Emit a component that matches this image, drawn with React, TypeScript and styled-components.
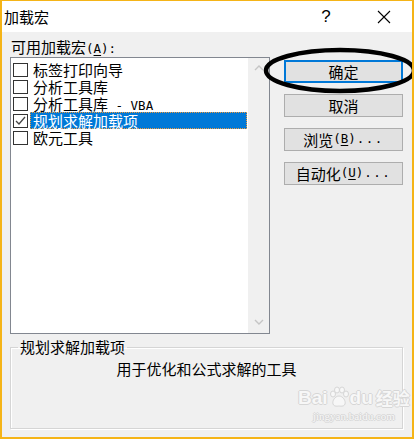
import React from "react";
import styled, { createGlobalStyle } from "styled-components";

const GlobalStyle = createGlobalStyle`
  html, body { margin: 0; padding: 0; background: #ffffff; }
  * { box-sizing: border-box; }
`;

const FONT = `"Noto Sans CJK SC", "Liberation Sans", sans-serif`;

const Window = styled.div`
  position: relative;
  width: 414px;
  height: 439px;
  border: 2px solid #f5b417;
  border-top-width: 1px;
  background: #f0f0f0;
  font-family: ${FONT};
  font-size: 15px;
  color: #000;
  display: flex;
  flex-direction: column;
  overflow: hidden;
`;

const TitleBar = styled.div`
  height: 31px;
  background: #ffffff;
  display: flex;
  align-items: center;
  padding-left: 2px;
`;

const Title = styled.div`
  flex: 1;
  font-size: 15px;
  line-height: 31px;
`;

const TitleButton = styled.div<{ $w: number }>`
  width: ${(p) => p.$w}px;
  height: 31px;
  display: flex;
  align-items: center;
  justify-content: center;
  font-family: "Liberation Sans", sans-serif;
  font-size: 17px;
`;

const Body = styled.div`
  flex: 1;
  display: flex;
  flex-direction: column;
  padding: 0 9px 0 8px;
`;

const TopArea = styled.div`
  display: grid;
  grid-template-columns: 260px 119px;
  column-gap: 14px;
`;

const LeftCol = styled.div`
  display: flex;
  flex-direction: column;
`;

const FieldLabel = styled.div`
  height: 25px;
  padding-top: 6px;
  padding-left: 1px;
  line-height: 18px;
  font-size: 15px;
`;

const Mono = styled.span`
  font-family: "DejaVu Sans Mono", "Liberation Mono", monospace;
  font-size: 12.5px;
`;

const Ul = styled.span`
  text-decoration: underline;
  text-underline-offset: 2px;
`;

const ListBox = styled.div`
  height: 277px;
  border: 1px solid #828790;
  background: #ffffff;
  display: flex;
`;

const ListItems = styled.div`
  flex: 1;
  padding-top: 3px;
  display: flex;
  flex-direction: column;
`;

const Row = styled.div`
  height: 17px;
  display: flex;
  align-items: center;
`;

const Check = styled.div`
  width: 15px;
  height: 14px;
  margin-left: 2px;
  border: 1px solid #333333;
  background: #fff;
  display: flex;
  align-items: center;
  justify-content: center;
`;

const ItemLabel = styled.div<{ $selected?: boolean }>`
  flex: 1;
  height: 17px;
  margin-left: 2px;
  margin-right: 1px;
  padding-left: 2px;
  line-height: 15px;
  font-size: 15px;
  white-space: pre;
  color: ${(p) => (p.$selected ? "#ffffff" : "#000000")};
  background: ${(p) => (p.$selected ? "#0078d7" : "transparent")};
  border: 1px dotted ${(p) => (p.$selected ? "#f09a3e" : "transparent")};
`;

const ScrollTrack = styled.div`
  width: 21px;
  background: #f0f0f0;
  display: flex;
  flex-direction: column;
  justify-content: space-between;
  align-items: center;
  padding: 7px 0 8px;
`;

const RightCol = styled.div`
  padding-top: 28px;
  display: flex;
  flex-direction: column;
  gap: 11px;
`;

const Button = styled.div<{ $default?: boolean }>`
  height: 23px;
  background: #e1e1e1;
  border: ${(p) => (p.$default ? "2px solid #0078d7" : "1px solid #adadad")};
  display: flex;
  align-items: center;
  justify-content: center;
  font-size: 15px;
  line-height: 1;
`;

const Dots = styled.span`
  font-family: "DejaVu Sans Mono", monospace;
  font-size: 12.5px;
  letter-spacing: 1.5px;
  margin-left: 1px;
`;

const Group = styled.fieldset`
  margin: 4px 0 0 0;
  padding: 0;
  height: 91px;
  border: 1px solid #d5d5d5;
  box-shadow: inset 1px 1px 0 #ffffff, 1px 1px 0 #ffffff;
  display: flex;
  flex-direction: column;
  align-items: center;
`;

const Legend = styled.legend`
  margin-left: 7px;
  padding: 0 2px;
  font-size: 15px;
  line-height: 18px;
`;

const Description = styled.div`
  margin-top: 4px;
  font-size: 15px;
  line-height: 18px;
`;

const Annotation = styled.svg`
  position: absolute;
  left: 258px;
  top: 44px;
  pointer-events: none;
`;

const Watermark = styled.div`
  position: absolute;
  left: 296px;
  top: 385px;
  display: flex;
  flex-direction: column;
  align-items: center;
  color: #f7f7f7;
  font-family: "Liberation Sans", sans-serif;
  text-shadow: -1px 0 #d6d6d6, 1px 0 #d6d6d6, 0 -1px #d6d6d6, 0 1px #d6d6d6;
  pointer-events: none;
`;

const WmTop = styled.div`
  display: flex;
  align-items: flex-end;
  font-weight: bold;
  font-size: 19px;
  line-height: 20px;
`;

const WmCjk = styled.span`
  font-family: "Noto Sans CJK SC", sans-serif;
  font-size: 17px;
  margin-left: 3px;
`;

const WmUrl = styled.div`
  font-family: "Liberation Serif", serif;
  font-size: 11px;
  line-height: 14px;
  margin-top: 1px;
`;

const Chevron = ({ up }: { up?: boolean }) => (
  <svg width="10" height="6" viewBox="0 0 10 6">
    <polyline
      points={up ? "1,5 5,1 9,5" : "1,1 5,5 9,1"}
      fill="none"
      stroke="#c5c5c5"
      strokeWidth="1.4"
    />
  </svg>
);

const items = [
  { label: "标签打印向导", checked: false },
  { label: "分析工具库", checked: false },
  { label: "分析工具库 - VBA", checked: false, mono: true },
  { label: "规划求解加载项", checked: true, selected: true },
  { label: "欧元工具", checked: false },
];

export default function App() {
  return (
    <>
      <GlobalStyle />
      <Window>
        <TitleBar>
          <Title>加载宏</Title>
          <TitleButton $w={60}>?</TitleButton>
          <TitleButton $w={56}>
            <svg width="14" height="14" viewBox="0 0 14 14">
              <path d="M1 1 L13 13 M13 1 L1 13" stroke="#000" strokeWidth="1.1" />
            </svg>
          </TitleButton>
        </TitleBar>
        <Body>
          <TopArea>
            <LeftCol>
              <FieldLabel>
                可用加载宏<Mono>(<Ul>A</Ul>):</Mono>
              </FieldLabel>
              <ListBox>
                <ListItems>
                  {items.map((it) => (
                    <Row key={it.label}>
                      <Check>
                        {it.checked && (
                          <svg width="11" height="10" viewBox="0 0 11 10">
                            <polyline
                              points="1,5 4,8 10,1"
                              fill="none"
                              stroke="#444"
                              strokeWidth="1.3"
                            />
                          </svg>
                        )}
                      </Check>
                      <ItemLabel $selected={it.selected}>
                        {it.mono ? (
                          <>
                            分析工具库<Mono> - VBA</Mono>
                          </>
                        ) : (
                          it.label
                        )}
                      </ItemLabel>
                    </Row>
                  ))}
                </ListItems>
                <ScrollTrack>
                  <Chevron up />
                  <Chevron />
                </ScrollTrack>
              </ListBox>
            </LeftCol>
            <RightCol>
              <Button $default>确定</Button>
              <Button>取消</Button>
              <Button>
                浏览<Mono>(<Ul>B</Ul>)</Mono>
                <Dots>...</Dots>
              </Button>
              <Button>
                自动化<Mono>(<Ul>U</Ul>)</Mono>
                <Dots>...</Dots>
              </Button>
            </RightCol>
          </TopArea>
          <Group>
            <Legend>规划求解加载项</Legend>
            <Description>用于优化和公式求解的工具</Description>
          </Group>
        </Body>
        <Watermark>
          <WmTop>
            Bai
            <svg width="22" height="22" viewBox="0 0 22 22">
              <g fill="#f7f7f7" stroke="#d6d6d6" strokeWidth="1">
                <ellipse cx="5" cy="8" rx="2.5" ry="3" />
                <ellipse cx="9" cy="4" rx="2.5" ry="3" />
                <ellipse cx="14" cy="4" rx="2.5" ry="3" />
                <ellipse cx="18" cy="8" rx="2.5" ry="3" />
                <path d="M11 10 C7 10 4 15 5 18 C6 21 10 20 11 20 C12 20 16 21 17 18 C18 15 15 10 11 10 Z" />
              </g>
            </svg>
            du
            <WmCjk>经验</WmCjk>
          </WmTop>
          <WmUrl>jingyan.baidu.com</WmUrl>
        </Watermark>
        <Annotation width="160" height="54" viewBox="0 0 160 54">
          <ellipse
            cx="80"
            cy="25.5"
            rx="74"
            ry="20.5"
            fill="none"
            stroke="#000"
            strokeWidth="4.5"
          />
        </Annotation>
      </Window>
    </>
  );
}
